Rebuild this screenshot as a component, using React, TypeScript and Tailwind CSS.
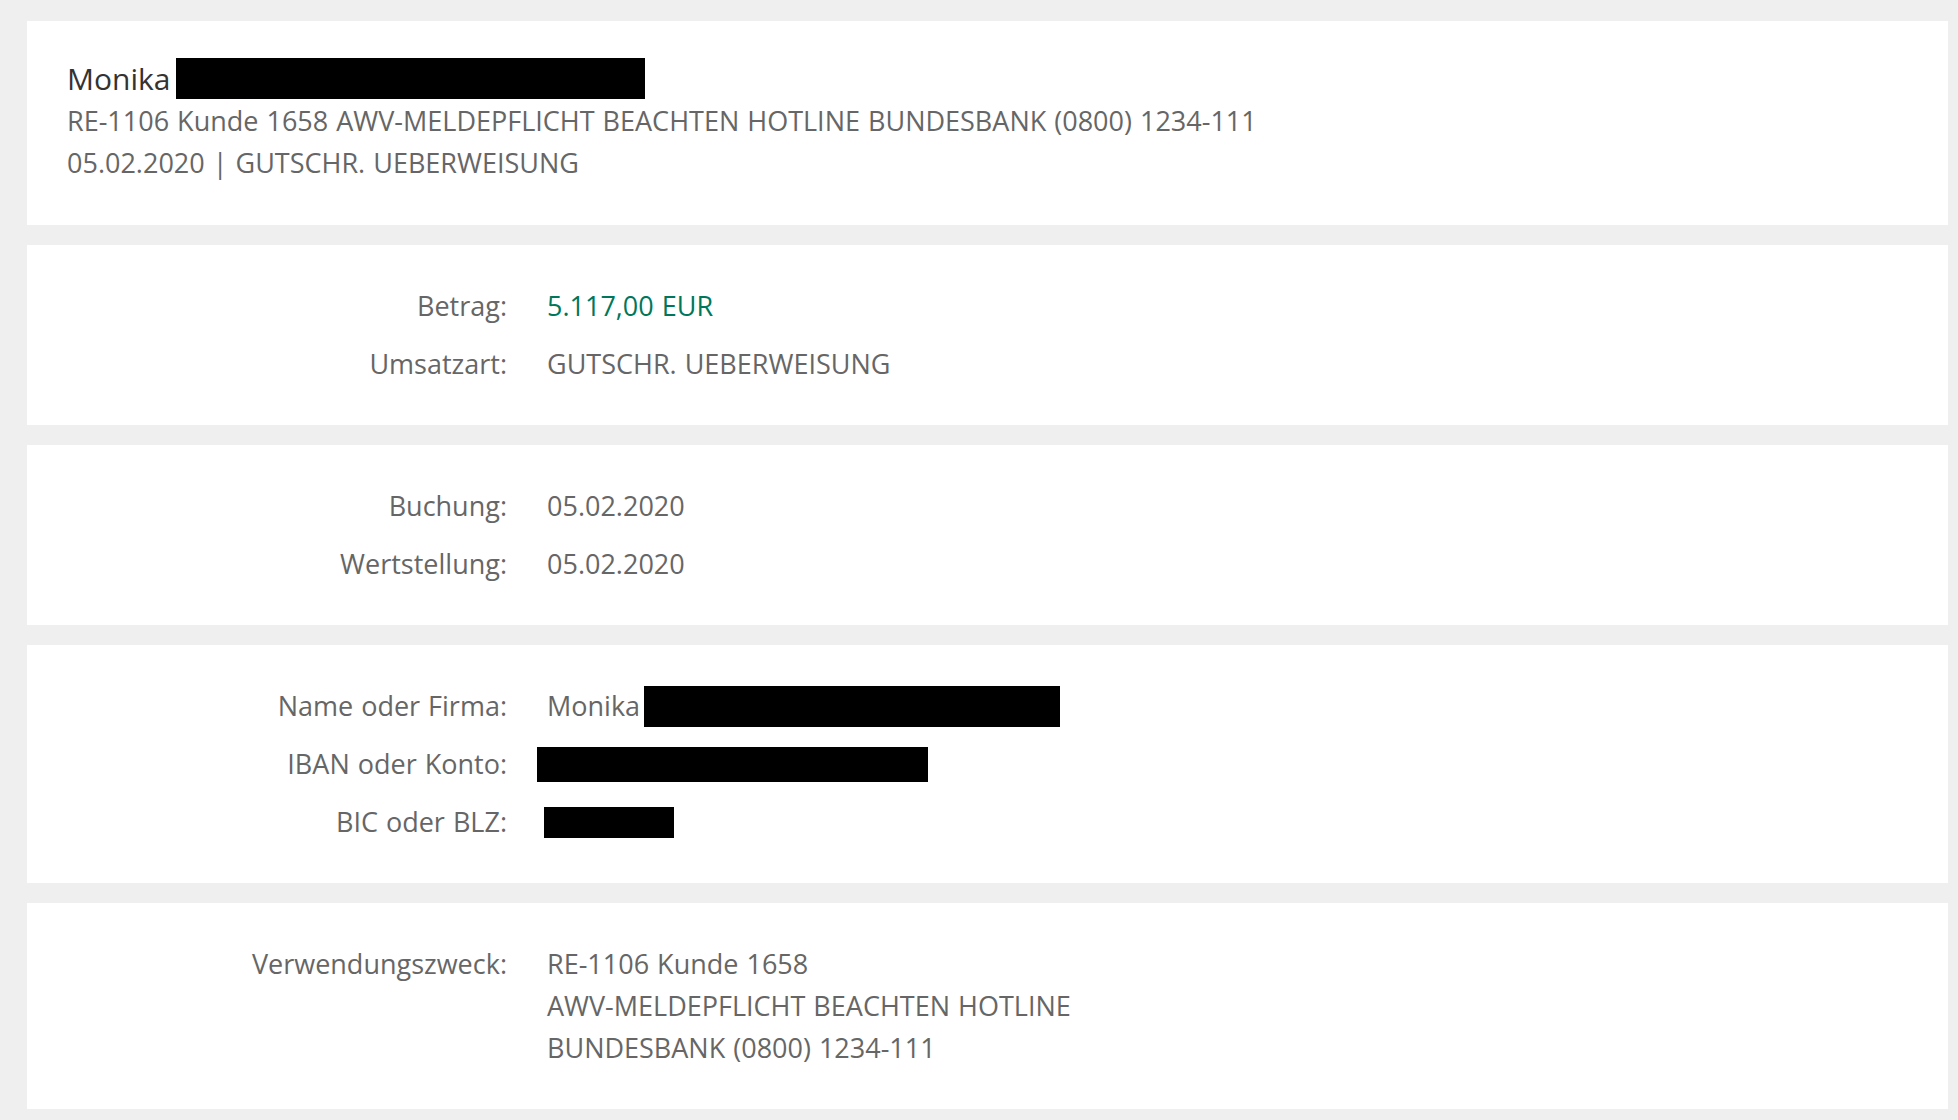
const FONT = "font-['Open_Sans','Noto_Sans',sans-serif]";

type Row = { label: string; value: React.ReactNode };

const CARD2: Row[] = [
  { label: "Betrag:", value: <span className="text-[#00775a]">5.117,00 EUR</span> },
  { label: "Umsatzart:", value: "GUTSCHR. UEBERWEISUNG" },
];

const CARD3: Row[] = [
  { label: "Buchung:", value: "05.02.2020" },
  { label: "Wertstellung:", value: "05.02.2020" },
];

const CARD4: Row[] = [
  {
    label: "Name oder Firma:",
    value: (
      <span className="flex items-center">
        Monika
        <span className="ml-[4px] inline-block h-[41px] w-[416px] bg-black" />
      </span>
    ),
  },
  {
    label: "IBAN oder Konto:",
    value: (
      <span className="flex h-[42px] items-center">
        <span className="-ml-[10px] inline-block h-[35px] w-[391px] bg-black" />
      </span>
    ),
  },
  {
    label: "BIC oder BLZ:",
    value: (
      <span className="flex h-[42px] items-center">
        <span className="-ml-[3px] inline-block h-[31px] w-[130px] bg-black" />
      </span>
    ),
  },
];

const CARD5: Row[] = [
  {
    label: "Verwendungszweck:",
    value: (
      <>
        <div>RE-1106 Kunde 1658</div>
        <div>AWV-MELDEPFLICHT BEACHTEN HOTLINE</div>
        <div>BUNDESBANK (0800) 1234-111</div>
      </>
    ),
  },
];

function Card({ children, className = "" }: { children: React.ReactNode; className?: string }) {
  return <section className={"bg-white " + className}>{children}</section>;
}

function DetailCard({ rows }: { rows: Row[] }) {
  return (
    <Card className="py-10 pl-10">
      <dl className="grid grid-cols-[440px_1fr] gap-x-10 gap-y-4 text-[27px] leading-[42px] text-[#666] [word-spacing:1px]">
        {rows.map((r) => (
          <div key={r.label} className="contents">
            <dt className="text-right">{r.label}</dt>
            <dd>{r.value}</dd>
          </div>
        ))}
      </dl>
    </Card>
  );
}

export default function App() {
  return (
    <main className={`${FONT} flex min-h-screen flex-col gap-5 bg-[#efefef] pb-3 pl-[27px] pr-[10px] pt-[21px]`}>
      {/* header card */}
      <Card className="px-10 pb-[41px] pt-[37px]">
        <div className="flex h-[41px] items-center text-[30px] text-[#333]">
          Monika
          <span className="ml-[6px] inline-block h-[41px] w-[469px] bg-black" />
        </div>
        <div className="mt-px text-[27px] leading-[42px] text-[#666] [word-spacing:1px]">
          <p>RE-1106 Kunde 1658 AWV-MELDEPFLICHT BEACHTEN HOTLINE BUNDESBANK (0800) 1234-111</p>
          <p>05.02.2020 | GUTSCHR. UEBERWEISUNG</p>
        </div>
      </Card>

      <DetailCard rows={CARD2} />
      <DetailCard rows={CARD3} />
      <DetailCard rows={CARD4} />
      <DetailCard rows={CARD5} />
    </main>
  );
}
